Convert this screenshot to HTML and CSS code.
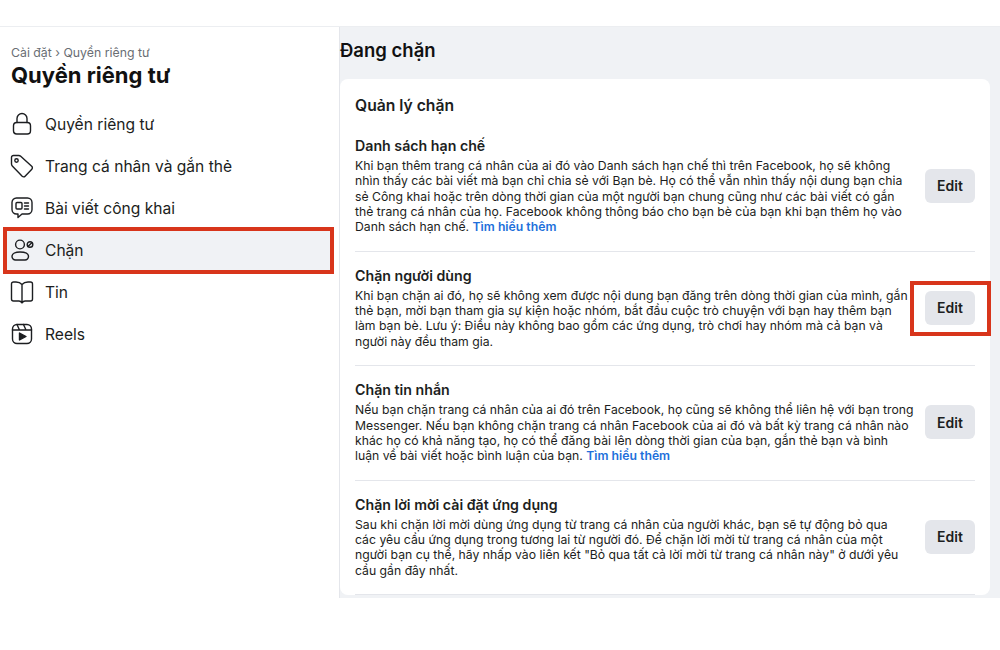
FILE: index.html
```html
<!DOCTYPE html>
<html lang="vi">
<head>
<meta charset="utf-8">
<title>Quyền riêng tư</title>
<link rel="stylesheet" href="styles.css">
</head>
<body>
<div class="top"></div>
<div class="page">
  <aside class="side">
    <div class="crumb">Cài đặt › Quyền riêng tư</div>
    <h1 class="side-title">Quyền riêng tư</h1>
    <nav class="nav">
      <div class="nav-item">
        <svg class="ico" viewBox="0 0 24 24"><rect x="3.500" y="10.500" width="17" height="11.500" rx="3.200"/><path d="M7 10.500V6.500a5 5 0 0 1 10 0v4"/></svg>
        <span>Quyền riêng tư</span>
      </div>
      <div class="nav-item">
        <svg class="ico" viewBox="0 0 24 24"><path d="M1.500 3.500a2 2 0 0 1 2-2h5.200a3 3 0 0 1 2 .8l11 10a2 2 0 0 1 .1 2.900l-6.700 7a2 2 0 0 1-2.900.1L2.300 12a3 3 0 0 1-.8-2z"/><circle cx="6.500" cy="6.500" r="1.700"/></svg>
        <span>Trang cá nhân và gắn thẻ</span>
      </div>
      <div class="nav-item">
        <svg class="ico" viewBox="0 0 24 24"><path d="M6.500 2h11A4.500 4.500 0 0 1 22 6.500v7a4.500 4.500 0 0 1-4.500 4.500H12l-4 3.500V18H6.500A4.500 4.500 0 0 1 2 13.500v-7A4.500 4.500 0 0 1 6.500 2z"/><rect x="6" y="6.500" width="6" height="6.500" rx="1"/><path d="M14.500 7h4M14.500 10h4M14.500 13h4"/></svg>
        <span>Bài viết công khai</span>
      </div>
      <div class="nav-item active">
        <svg class="ico" viewBox="0 0 24 24"><circle cx="10" cy="6.500" r="4.400"/><path d="M5.500 22A3.500 3.500 0 0 1 2 18.500c0-3 3.500-4.500 8-4.500s8.500 1.500 8.500 4.500a3.500 3.500 0 0 1-3.500 3.500z"/><circle cx="20" cy="6.500" r="2.800"/><path d="M18.200 8.300l3.600-3.600"/></svg>
        <span>Chặn</span>
        <div class="marker"></div>
      </div>
      <div class="nav-item">
        <svg class="ico" viewBox="0 0 24 24"><path d="M12 4.500C10.500 2.800 8.500 2 6 2H3.500A2 2 0 0 0 1.500 4v15a2 2 0 0 0 2 2H9c1.300 0 2.200.7 3 2 .8-1.300 1.700-2 3-2h5.500a2 2 0 0 0 2-2V4a2 2 0 0 0-2-2H18c-2.500 0-4.500.8-6 2.500zM12 4.500V22"/></svg>
        <span>Tin</span>
      </div>
      <div class="nav-item">
        <svg class="ico" viewBox="0 0 24 24"><rect x="2.500" y="2.500" width="19" height="19" rx="4.500"/><path d="M2.500 8h19M7 2.500L9.500 8M13.500 2.500L16 8"/><path class="fill" d="M9.500 11l6.500 3.500-6.500 3.500z"/></svg>
        <span>Reels</span>
      </div>
    </nav>
  </aside>
  <main class="main">
    <h2 class="main-title">Đang chặn</h2>
    <section class="card">
      <h3 class="card-title">Quản lý chặn</h3>
      <div class="row">
        <div class="copy">
          <h4 class="row-title">Danh sách hạn chế</h4>
          <p class="row-text">Khi bạn thêm trang cá nhân của ai đó vào Danh sách hạn chế thì trên Facebook, họ sẽ không<br>nhìn thấy các bài viết mà bạn chỉ chia sẻ với Bạn bè. Họ có thể vẫn nhìn thấy nội dung bạn chia<br>sẻ Công khai hoặc trên dòng thời gian của một người bạn chung cũng như các bài viết có gắn<br>thẻ trang cá nhân của họ. Facebook không thông báo cho bạn bè của bạn khi bạn thêm họ vào<br>Danh sách hạn chế. <a class="more">Tìm hiểu thêm</a></p>
        </div>
        <div class="edit">Edit</div>
      </div>
      <div class="row">
        <div class="copy">
          <h4 class="row-title">Chặn người dùng</h4>
          <p class="row-text">Khi bạn chặn ai đó, họ sẽ không xem được nội dung bạn đăng trên dòng thời gian của mình, gắn<br>thẻ bạn, mời bạn tham gia sự kiện hoặc nhóm, bắt đầu cuộc trò chuyện với bạn hay thêm bạn<br>làm bạn bè. Lưu ý: Điều này không bao gồm các ứng dụng, trò chơi hay nhóm mà cả bạn và<br>người này đều tham gia.</p>
        </div>
        <div class="edit">Edit<div class="marker"></div></div>
      </div>
      <div class="row">
        <div class="copy">
          <h4 class="row-title">Chặn tin nhắn</h4>
          <p class="row-text">Nếu bạn chặn trang cá nhân của ai đó trên Facebook, họ cũng sẽ không thể liên hệ với bạn trong<br>Messenger. Nếu bạn không chặn trang cá nhân Facebook của ai đó và bất kỳ trang cá nhân nào<br>khác họ có khả năng tạo, họ có thể đăng bài lên dòng thời gian của bạn, gắn thẻ bạn và bình<br>luận về bài viết hoặc bình luận của bạn. <a class="more">Tìm hiểu thêm</a></p>
        </div>
        <div class="edit">Edit</div>
      </div>
      <div class="row">
        <div class="copy">
          <h4 class="row-title">Chặn lời mời cài đặt ứng dụng</h4>
          <p class="row-text">Sau khi chặn lời mời dùng ứng dụng từ trang cá nhân của người khác, bạn sẽ tự động bỏ qua<br>các yêu cầu ứng dụng trong tương lai từ người đó. Để chặn lời mời từ trang cá nhân của một<br>người bạn cụ thể, hãy nhấp vào liên kết "Bỏ qua tất cả lời mời từ trang cá nhân này" ở dưới yêu<br>cầu gần đây nhất.</p>
        </div>
        <div class="edit">Edit</div>
      </div>
    </section>
  </main>
</div>
</body>
</html>
```
FILE: styles.css
```css
* { box-sizing: border-box; }
html, body { margin: 0; padding: 0; }
body {
  width: 1000px;
  height: 650px;
  background: #fff;
  overflow: hidden;
  font-family: Inter, "Noto Sans", sans-serif;
  color: #1c1e21;
}
.top { height: 26px; background: #fff; }
.page {
  display: flex;
  height: 572px;
  border-top: 1px solid #eceef1;
  overflow: hidden;
}
.side {
  width: 340px;
  flex: none;
  background: #fff;
  border-right: 1px solid #e4e6eb;
  padding-top: 18px;
}
.crumb {
  padding-left: 11px;
  font-size: 12.300px;
  line-height: 16px;
  color: #6a6e74;
}
.side-title {
  margin: -1px 0 0;
  padding-left: 11px;
  font-size: 22px;
  line-height: 30px;
  font-weight: 700;
  color: #111;
}
.nav { margin-top: 13px; }
.nav-item {
  position: relative;
  display: flex;
  align-items: center;
  gap: 11px;
  height: 42px;
  margin: 0 6px 0 4px;
  padding-left: 6px;
  font-size: 15.600px;
  color: #1c1e21;
}
.nav-item.active { background: #f0f2f5; }
.ico {
  width: 24px;
  height: 24px;
  flex: none;
  fill: none;
  stroke: #1c1e21;
  stroke-width: 1.400;
  stroke-linejoin: round;
  stroke-linecap: round;
}
.ico .fill { fill: #1c1e21; }
.marker {
  position: absolute;
  border: 4px solid #d8351b;
}
.nav-item .marker { inset: -2px -1px -3px -1px; }
.edit .marker { inset: -10px -16px -11px -15px; }
.main {
  flex: 1;
  min-width: 0;
  background: #f0f2f5;
}
.main-title {
  margin: 0;
  height: 52px;
  font-size: 18.500px;
  line-height: 47px;
  font-weight: 600;
  color: #111;
}
.card {
  width: 650px;
  background: #fff;
  border-radius: 8px;
  padding: 17px 15px 0;
}
.card-title {
  margin: 0 0 6px;
  font-size: 15.700px;
  line-height: 20px;
  font-weight: 600;
  color: #1c1e21;
}
.row {
  display: flex;
  align-items: center;
  justify-content: space-between;
  padding: 15px 0 16.300px;
  border-bottom: 1px solid #e4e6eb;
}
.row-title {
  margin: 0 0 3px;
  font-size: 14.200px;
  line-height: 18px;
  font-weight: 600;
  color: #1c1e21;
}
.row-text {
  margin: 0;
  font-size: 12.220px;
  line-height: 15.300px;
  white-space: nowrap;
  color: #1c1e21;
}
.more { color: #216fdb; font-weight: 600; }
.edit {
  position: relative;
  width: 50px;
  height: 34px;
  flex: none;
  display: flex;
  align-items: center;
  justify-content: center;
  background: #e4e6eb;
  border-radius: 6px;
  font-size: 14px;
  font-weight: 600;
  color: #1c1e21;
}
```
